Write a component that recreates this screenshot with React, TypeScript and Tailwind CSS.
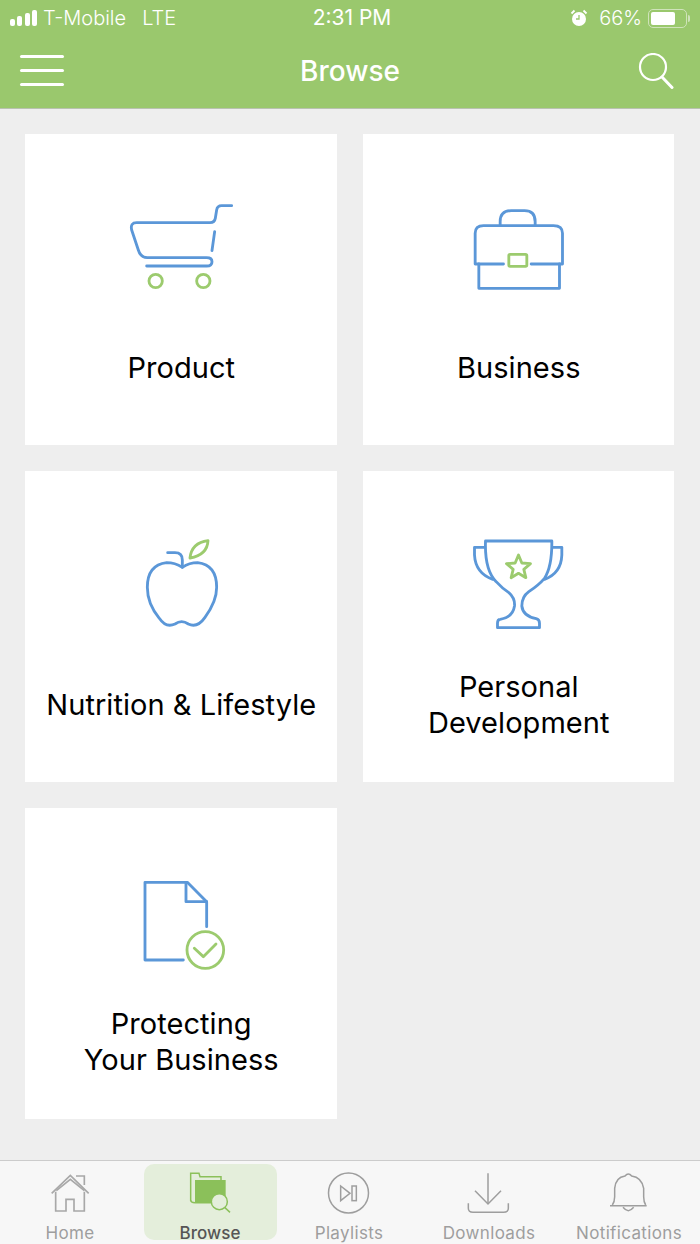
import React from "react";

const BLUE = "#5b97d8";
const GREEN = "#9ccb6e";

function Art({ dx, dy, children }: { dx: number; dy: number; children: React.ReactNode }) {
  return (
    <svg width="140" height="110" viewBox="0 0 140 110" fill="none" className="mt-[56px] shrink-0">
      <g transform={`translate(${dx} ${dy}) scale(0.3333)`} strokeWidth="8.5" strokeLinecap="round" strokeLinejoin="round">
        {children}
      </g>
    </svg>
  );
}

const Cart = () => (
  <Art dx={-1} dy={0}>
    <path stroke={BLUE} d="M365 47H335Q322 47 320 60L316 85Q314 98 300 98H80Q60 98 65 120L85 180Q92 203 112 203H290Q306 203 306 215Q306 228 290 228H110" />
    <path stroke={BLUE} d="M314 125L306 182" />
    <circle cx="137" cy="273" r="20" stroke={GREEN} />
    <circle cx="280" cy="273" r="20" stroke={GREEN} />
  </Art>
);

const Briefcase = () => (
  <Art dx={11.5} dy={5}>
    <path stroke={BLUE} d="M122 90V80Q122 47 155 47H195Q227 47 227 80V90" />
    <path stroke={BLUE} d="M132 207H47V115Q47 92 72 92H282Q309 92 309 115V207H215" />
    <path stroke={BLUE} d="M58 207V280H300V207" />
    <rect x="148" y="178" width="54" height="36" rx="4" stroke={GREEN} />
  </Art>
);

const Apple = () => (
  <Art dx={19} dy={3}>
    <path stroke={BLUE} d="M113 68H135Q157 68 157 90V112" />
    <path stroke={BLUE} d="M157 112Q135 98 110 98Q52 105 52 172Q52 222 88 265Q108 295 135 282Q155 268 175 282Q202 295 225 262Q260 215 260 172Q260 105 203 98Q178 98 157 112Z" />
    <path stroke={GREEN} d="M180 84Q185 38 234 32Q232 75 180 84Z" />
  </Art>
);

const Trophy = () => (
  <Art dx={11.5} dy={3}>
    <path stroke={BLUE} d="M78 33H277Q278 110 255 145Q238 165 208 185Q187 200 187 228Q190 258 230 266Q240 268 240 280V293H114V280Q114 268 122 268Q160 262 165 228Q167 205 148 188Q128 175 110 155Q75 120 78 33Z" />
    <path stroke={BLUE} d="M75 52H45V75Q48 130 100 148" />
    <path stroke={BLUE} d="M280 52H307V75Q305 130 255 148" />
    <polygon stroke={GREEN} points="177,75 187,99 213,101 193,118 199,143 177,130 155,143 161,118 141,101 167,99" />
  </Art>
);

const Doc = () => (
  <Art dx={19} dy={6}>
    <path stroke={BLUE} d="M160 270H45V37H172L230 95V170" />
    <path stroke={BLUE} d="M168 37V95H230" />
    <circle cx="226" cy="240" r="55" stroke={GREEN} />
    <path stroke={GREEN} d="M193 235L220 260L258 222" />
  </Art>
);

function Card({ icon, children }: { icon: React.ReactNode; children: React.ReactNode }) {
  return (
    <div className="h-[311px] bg-white flex flex-col items-center">
      {icon}
      <div className="h-[136px] pl-[1px] flex items-center justify-center text-center text-[29px] tracking-[0.05px] leading-[36px] text-black">
        {children}
      </div>
    </div>
  );
}

function Tab({ vb, label, active, children }: { vb: string; label: string; active?: boolean; children: React.ReactNode }) {
  return (
    <div className="relative w-[140px] h-full flex flex-col items-center">
      {active && <div className="absolute left-[4px] top-[3px] w-[133px] h-[76px] rounded-[10px] bg-[#e4eedb]" />}
      <svg width="140" height="50" viewBox={vb} fill="none" className="relative mt-[4px] shrink-0">
        {children}
      </svg>
      <span className={`relative mt-[8px] text-[17px] leading-[20px] ${active ? "tracking-[0.1px] text-[#555555] font-medium" : "tracking-[0.35px] text-[#9e9e9e]"}`}>
        {label}
      </span>
    </div>
  );
}

export default function App() {
  return (
    <div className="w-[700px] h-[1244px] flex flex-col bg-[#eeeeee] overflow-hidden font-['Inter','Liberation_Sans',sans-serif]">
      <header className="h-[109px] shrink-0 bg-[#9ac86d] border-b border-[#b9c2b0] text-white">
        <div className="h-[36px] flex items-center pl-[10px] pr-[10px] text-[20px] leading-[22px] font-light">
          <div className="flex-1 flex items-center">
            <svg width="30" height="18" viewBox="0 0 30 18" className="shrink-0" fill="#ffffff">
              <rect x="0" y="10" width="5" height="7" rx="2" />
              <rect x="7" y="7" width="5" height="10" rx="2" />
              <rect x="15" y="4" width="5" height="13" rx="2" />
              <rect x="22" y="1" width="5" height="16" rx="2" />
            </svg>
            <span className="ml-[3px]">T-Mobile</span>
            <span className="ml-[16px]">LTE</span>
          </div>
          <span className="font-normal ml-[4px] text-[21px]">2:31 PM</span>
          <div className="flex-1 flex items-center justify-end">
            <svg width="18" height="18" viewBox="0 0 18 18" fill="#ffffff" className="shrink-0 mr-[11px]">
              <circle cx="9" cy="10" r="7" />
              <path d="M9 6V10H6" stroke="#9ac86d" strokeWidth="1.3" fill="none" />
              <path d="M1.5 4.5L4.5 1.5M16.5 4.5L13.5 1.5" stroke="#ffffff" strokeWidth="1.8" />
            </svg>
            <span>66%</span>
            <div className="ml-[6px] w-[39px] h-[19px] rounded-[5px] border border-[#cfe3ba] p-[2px]">
              <div className="w-[24px] h-full rounded-[2px] bg-white" />
            </div>
            <div className="ml-[1px] w-[2px] h-[7px] rounded-r bg-[#cfe3ba]" />
          </div>
        </div>
        <div className="h-[72px] flex items-center justify-between pl-[20px] pr-[26px]">
          <div className="w-[44px] flex flex-col gap-[11px] -mt-[3px]">
            <div className="h-[3px] rounded-full bg-white" />
            <div className="h-[3px] rounded-full bg-white" />
            <div className="h-[3px] rounded-full bg-white" />
          </div>
          <span className="text-[28px] leading-[34px] font-medium -mt-[2px] -ml-[2px]">Browse</span>
          <svg width="36" height="36" viewBox="0 0 36 36" fill="none" stroke="#ffffff" className="shrink-0 -mt-[2px]">
            <circle cx="15" cy="14" r="13" strokeWidth="2.2" />
            <path d="M24 24L34 34.5" strokeWidth="3" strokeLinecap="round" />
          </svg>
        </div>
      </header>

      <main className="flex-1 pt-[25px] pl-[25px] pr-[26px] grid grid-cols-2 gap-x-[26px] gap-y-[26px] content-start">
        <Card icon={<Cart />}>Product</Card>
        <Card icon={<Briefcase />}>Business</Card>
        <Card icon={<Apple />}>Nutrition &amp; Lifestyle</Card>
        <Card icon={<Trophy />}>
          Personal
          <br />
          Development
        </Card>
        <Card icon={<Doc />}>
          Protecting
          <br />
          Your Business
        </Card>
      </main>

      <nav className="h-[84px] shrink-0 bg-[#f7f7f7] border-t border-[#cccccc] flex pr-[1px]">
        <Tab vb="0 45 420 150" label="Home">
          <g stroke="#a8a8a8" strokeWidth="5">
            <path d="M155 130L211 76L266 130" />
            <path d="M169 122L211 88L253 122" />
            <path d="M167 125V183H198V148H222V183H253V125" />
            <path d="M228 78H253V105" />
          </g>
        </Tab>
        <Tab vb="420 45 420 150" label="Browse" active>
          <path d="M572 152V70H597L600 80H663V90" stroke="#8bc05a" strokeWidth="4.5" />
          <path d="M572 150Q572 158 585 158H635" stroke="#8bc05a" strokeWidth="4.5" />
          <rect x="585" y="90" width="92" height="68" fill="#8bc05a" />
          <circle cx="658" cy="155" r="24" fill="#e4eedb" stroke="#8bc05a" strokeWidth="4.5" />
          <path d="M674 172L690 187" stroke="#8bc05a" strokeWidth="4.5" />
        </Tab>
        <div className="-ml-[1px] flex">
          <Tab vb="-210 45 420 150" label="Playlists">
            <g stroke="#9e9e9e" strokeWidth="4.5">
              <circle cx="-1.5" cy="129" r="60" />
              <path d="M-25 108V152L3 130Z" />
              <rect x="9" y="108" width="13" height="44" />
            </g>
          </Tab>
          <Tab vb="210 45 420 150" label="Downloads">
            <g stroke="#9e9e9e" strokeWidth="4.5">
              <path d="M417 70V162" />
              <path d="M378 122L417 162L456 122" />
              <path d="M358 160V175Q358 187 372 187H464Q478 187 478 175V160" />
            </g>
          </Tab>
          <Tab vb="630 45 420 150" label="Notifications">
            <g stroke="#9e9e9e" strokeWidth="4.5">
              <path d="M783 167H893" />
              <path d="M790 165Q797 155 797 140V115Q800 82 828 78Q838 66 848 78Q878 82 884 115V140Q884 155 890 165" />
              <path d="M822 172Q838 192 854 172" />
            </g>
          </Tab>
        </div>
      </nav>
    </div>
  );
}
